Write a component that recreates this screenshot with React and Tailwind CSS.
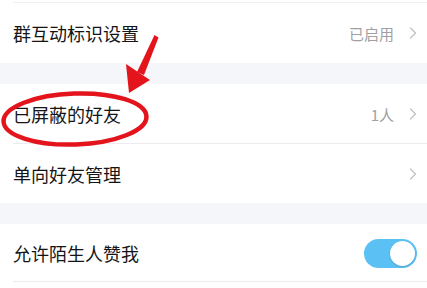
import React from "react";

const Chevron = () => (
  <svg width="8" height="12" viewBox="0 0 8 12" className="shrink-0">
    <path d="M1.5 1 L6.5 6 L1.5 11" fill="none" stroke="#c4c4c6" strokeWidth="1.4" strokeLinecap="round" strokeLinejoin="round" />
  </svg>
);

const Row = ({ label, value, chevron = true, toggle = false, h, border = true }) => (
  <div className={`relative flex items-center bg-white pl-[13px] pr-[10px] ${h}`}>
    <span className="flex-1 text-[18px] text-[#151517] leading-none">{label}</span>
    {value && <span className="text-[15px] text-[#a0a0a4] leading-none mr-[15px]">{value}</span>}
    {chevron && <Chevron />}
    {toggle && (
      <div className="relative w-[53px] h-[29px] rounded-full bg-[#5bc1f4]">
        <div className="absolute right-[2px] top-[2px] w-[25px] h-[25px] rounded-full bg-white shadow-[0_1px_2px_rgba(0,0,0,0.15)]" />
      </div>
    )}
    {border && <div className="absolute left-[13px] right-0 bottom-0 h-px bg-[#ececee]" />}
  </div>
);

export default function App() {
  return (
    <div
      className="relative w-[427px] h-[288px] overflow-hidden bg-white"
      style={{ fontFamily: '"Noto Sans CJK SC", "Noto Sans", sans-serif' }}
    >
      <div className="relative h-[3px] bg-white">
        <div className="absolute left-[13px] right-0 bottom-0 h-px bg-[#f0f0f2]" />
      </div>
      <Row label="群互动标识设置" value="已启用" h="h-[60px]" border={false} />
      <div className="h-[21px] bg-[#f5f6f9]" />
      <Row label="已屏蔽的好友" value="1人" h="h-[60px]" />
      <Row label="单向好友管理" h="h-[59px]" border={false} />
      <div className="h-[21px] bg-[#f5f6f9]" />
      <Row label="允许陌生人赞我" chevron={false} toggle h="h-[58px]" />
      <div className="h-[7px] bg-white" />

      <svg className="absolute left-0 top-0 pointer-events-none" width="427" height="288" viewBox="0 0 427 288">
        <ellipse cx="75" cy="119" rx="71.5" ry="25.5" fill="none" stroke="#e3141c" strokeWidth="4.5" transform="rotate(-2 75 119)" />
        <polygon points="154.5,35 158.5,37.5 144,75 137,72" fill="#e3141c" />
        <polygon points="126,64 150,80 129,93" fill="#e3141c" />
      </svg>
    </div>
  );
}
